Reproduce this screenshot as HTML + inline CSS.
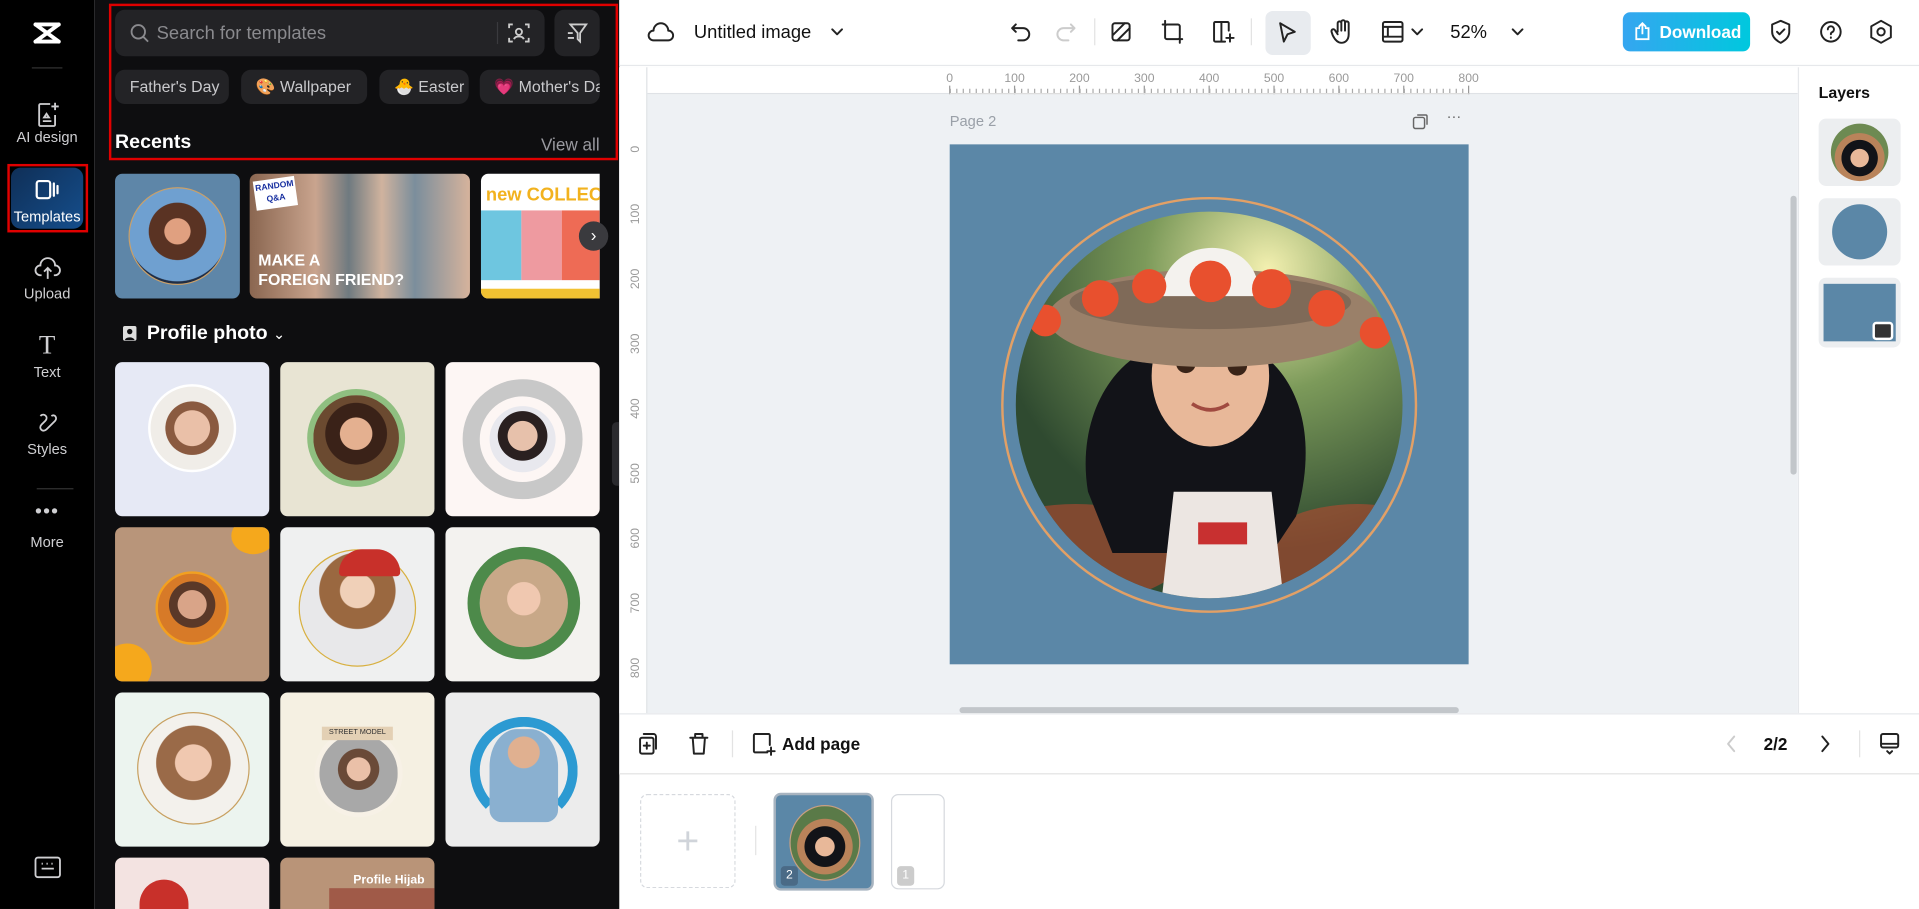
<!DOCTYPE html>
<html><head><meta charset="utf-8"><style>
*{box-sizing:border-box;margin:0;padding:0}
html,body{width:1919px;height:909px;overflow:hidden;background:#fff;font-family:"Liberation Sans",sans-serif}
#s{position:absolute;left:0;top:0;width:1568px;height:742.9px;transform:scale(1.22385,1.2234);transform-origin:0 0;overflow:hidden}
.a{position:absolute}
.side{left:0;top:0;width:77px;height:743px;background:#000}
.si{position:absolute;left:0;width:77px;text-align:center;color:#cfcfd2;font-size:12px}
.panel{left:77px;top:0;width:429px;height:743px;background:#0e0e10;overflow:hidden}
.chip{position:absolute;top:57px;height:28px;background:#232326;border-radius:8px;color:#c9c9cc;font-size:13px;line-height:28px;padding-left:12px;white-space:nowrap;overflow:hidden}
.cell{position:absolute;width:126px;height:126px;border-radius:6px;overflow:hidden}
.ph{position:absolute;border-radius:50%}
.ic{stroke:#222;fill:none;stroke-width:1.6;stroke-linecap:round;stroke-linejoin:round}
</style></head><body><div id="s">

<div class="a side">
 <svg class="a" style="left:26px;top:17px" width="25" height="20" viewBox="0 0 25 20"><path d="M3 3 L22 17 M22 3 L3 17 M3 3h19 M3 17h19" stroke="#fff" stroke-width="3.2" fill="none" stroke-linecap="round"/></svg>
 <div class="a" style="left:26px;top:55px;width:25px;height:1px;background:#333"></div>
 <svg class="a" style="left:29px;top:83px" width="20" height="22" viewBox="0 0 20 22"><path d="M12 2H4a1 1 0 0 0-1 1v16a1 1 0 0 0 1 1h11a1 1 0 0 0 1-1v-8 M6 16h7 M7 13l2-3 2 3z" stroke="#cfcfd2" stroke-width="1.5" fill="none"/><path d="M16 1v6M13 4h6" stroke="#cfcfd2" stroke-width="1.5"/></svg>
 <div class="si" style="top:105px">AI design</div>
 <div class="a" style="left:9px;top:137px;width:59px;height:50px;border-radius:8px;background:linear-gradient(135deg,#0f2f57,#154e8c)"></div>
 <div class="a" style="left:6px;top:134px;width:66px;height:56px;border:2px solid #e00000"></div>
 <svg class="a" style="left:29px;top:146px" width="20" height="18" viewBox="0 0 20 18"><rect x="1" y="2" width="11" height="14" rx="2" stroke="#fff" stroke-width="1.8" fill="none"/><path d="M15 4v10M18 6v6" stroke="#fff" stroke-width="1.8" stroke-linecap="round"/></svg>
 <div class="si" style="top:170px;color:#fff;font-size:12px">Templates</div>
 <svg class="a" style="left:28px;top:210px" width="22" height="20" viewBox="0 0 22 20"><path d="M6 15H5a4 4 0 0 1 0-8 6 6 0 0 1 12 0 4 4 0 0 1 0 8h-1 M11 9v9 M8 12l3-3 3 3" stroke="#cfcfd2" stroke-width="1.5" fill="none"/></svg>
 <div class="si" style="top:233px">Upload</div>
 <div class="si" style="top:269px;font-size:22px;font-family:'Liberation Serif',serif">T</div>
 <div class="si" style="top:297px">Text</div>
 <svg class="a" style="left:29px;top:336px" width="20" height="20" viewBox="0 0 20 20"><path d="M4 4c3-3 7 1 4 4L5 11c-3 3 1 7 4 4l7-7c2-2 0-6-3-4" stroke="#cfcfd2" stroke-width="1.5" fill="none"/></svg>
 <div class="si" style="top:360px">Styles</div>
 <div class="a" style="left:30px;top:399px;width:30px;height:1px;background:#333"></div>
 <div class="si" style="top:410px;font-size:16px;letter-spacing:1px">•••</div>
 <div class="si" style="top:436px">More</div>
 <svg class="a" style="left:28px;top:700px" width="22" height="18" viewBox="0 0 22 18"><rect x="1" y="1" width="20" height="16" rx="2" stroke="#cfcfd2" stroke-width="1.5" fill="none"/><path d="M6 6h1M10 6h1M14 6h1M6 10h10" stroke="#cfcfd2" stroke-width="1.5"/></svg>
</div>

<div class="a panel">
 <div class="a" style="left:17px;top:8px;width:351px;height:38px;background:#232326;border-radius:8px"></div>
 <svg class="a" style="left:29px;top:19px" width="16" height="16" viewBox="0 0 16 16"><circle cx="7" cy="7" r="5.5" stroke="#8a8a8e" stroke-width="1.5" fill="none"/><path d="M11 11l4 4" stroke="#8a8a8e" stroke-width="1.5"/></svg>
 <div class="a" style="left:51px;top:19px;color:#8a8a8e;font-size:15px">Search for templates</div>
 <div class="a" style="left:329px;top:18px;width:1px;height:18px;background:#3a3a3e"></div>
 <svg class="a" style="left:338px;top:18px" width="18" height="18" viewBox="0 0 18 18"><path d="M1 5V2h3M14 2h3v3M17 13v3h-3M4 16H1v-3" stroke="#ccc" stroke-width="1.5" fill="none"/><circle cx="9" cy="8" r="2.5" stroke="#ccc" stroke-width="1.5" fill="none"/><path d="M5 14c1-3 7-3 8 0" stroke="#ccc" stroke-width="1.5" fill="none"/></svg>
 <div class="a" style="left:376px;top:8px;width:37px;height:38px;background:#232326;border-radius:8px"></div>
 <svg class="a" style="left:386px;top:18px" width="18" height="18" viewBox="0 0 18 18"><path d="M3 2h13l-5 7v7l-2-2V9z M1 9h4 M1 13h5" stroke="#ccc" stroke-width="1.5" fill="none"/></svg>
 <div class="chip" style="left:17px;width:93px">Father's Day</div>
 <div class="chip" style="left:120px;width:103px">🎨 Wallpaper</div>
 <div class="chip" style="left:233px;width:73px">🐣 Easter</div>
 <div class="chip" style="left:315px;width:98px">💗 Mother's Da</div>
 <div class="a" style="left:17px;top:108px;color:#fff;font-size:16px;font-weight:bold">Recents</div>
 <div class="a" style="right:16px;top:110px;color:#9a9aa0;font-size:14px">View all</div>
 <div class="a" style="left:12px;top:3px;width:416px;height:128px;border:2px solid #e00000"></div>
 <div class="a" style="left:17px;top:142px;width:102px;height:102px;background:#5e86a8;border-radius:6px"><div class="ph" style="left:11px;top:11px;width:80px;height:80px;border:1px solid #c9a06a;background:radial-gradient(circle at 50% 45%,#e0a080 0 18%,#5a3323 19% 40%,#6fa0d0 41% 70%,#1f2d45 71%)"></div></div>
 <div class="a" style="left:127px;top:142px;width:180px;height:102px;border-radius:6px;overflow:hidden;background:linear-gradient(90deg,#8a6650 0,#c9a48e 30%,#6f7a80 45%,#d0b39e 60%,#7b8e9c 75%,#d6b39c 100%)">
  <div class="a" style="left:4px;top:4px;width:34px;height:24px;background:#fff;transform:rotate(-8deg);color:#1830a0;font-size:7px;font-weight:bold;text-align:center;line-height:10px;padding-top:2px">RANDOM<br>Q&amp;A</div>
  <div class="a" style="left:7px;top:63px;color:#fff;font-size:13px;font-weight:bold;line-height:16px">MAKE A<br>FOREIGN FRIEND?</div></div>
 <div class="a" style="left:316px;top:142px;width:97px;height:102px;border-radius:6px 0 0 6px;overflow:hidden;background:#fff">
  <div class="a" style="left:4px;top:9px;color:#f2b21e;font-size:15px;font-weight:bold;white-space:nowrap">new COLLEC</div>
  <div class="a" style="left:0;top:30px;width:33px;height:57px;background:#6ec6e0"></div><div class="a" style="left:33px;top:30px;width:33px;height:57px;background:#ee9aa0"></div><div class="a" style="left:66px;top:30px;width:31px;height:57px;background:#ee6b55"></div>
  <div class="a" style="left:0;top:94px;width:97px;height:8px;background:#f2c232"></div></div>
 <div class="a" style="left:396px;top:181px;width:24px;height:24px;border-radius:50%;background:#3a3a3e;color:#fff;font-size:14px;text-align:center;line-height:23px">›</div>
 <svg class="a" style="left:23px;top:266px" width="12" height="13" viewBox="0 0 12 13"><rect x="0.5" y="0.5" width="11" height="12" rx="1.5" fill="#ddd"/><circle cx="6" cy="5" r="2.2" fill="#0e0e10"/><path d="M2 12c1-3 7-3 8 0z" fill="#0e0e10"/></svg>
 <div class="a" style="left:43px;top:264px;color:#fff;font-size:16px;font-weight:bold">Profile photo <span style="font-size:12px;font-weight:normal">⌄</span></div>

 <div class="cell" style="left:17px;top:296px;background:#e6e9f5"><div class="ph" style="left:27px;top:18px;width:72px;height:72px;border:2px solid #fff;background:radial-gradient(circle at 50% 50%,#eac0a8 0 30%,#8a5a40 31% 45%,#f0ede8 46%)"></div></div>
 <div class="cell" style="left:152px;top:296px;background:#e8e4d3"><div class="ph" style="left:22px;top:22px;width:80px;height:80px;border:5px solid #8fbf80;background:radial-gradient(circle at 50% 45%,#e4b090 0 25%,#3a2218 26% 48%,#6b4a30 49%)"></div></div>
 <div class="cell" style="left:287px;top:296px;background:#fdf6f4"><div class="ph" style="left:14px;top:14px;width:98px;height:98px;border:14px solid #c8c8c8"><div class="ph" style="left:8px;top:8px;width:54px;height:54px;background:radial-gradient(circle at 50% 45%,#e7c1ab 0 30%,#2a2020 31% 50%,#e8e8ee 51%)"></div></div></div>

 <div class="cell" style="left:17px;top:431px;background:#b8957a"><div class="ph" style="left:33px;top:36px;width:60px;height:60px;border:2px solid #f2a020;background:radial-gradient(circle at 50% 45%,#d9a488 0 28%,#5a3828 29% 45%,#d77a28 46%)"></div><div class="a" style="left:-10px;top:95px;width:40px;height:40px;border-radius:50%;background:#f5a81c"></div><div class="a" style="left:95px;top:-8px;width:36px;height:30px;border-radius:50%;background:#f5a81c"></div></div>
 <div class="cell" style="left:152px;top:431px;background:#eff0f0"><div class="ph" style="left:15px;top:18px;width:96px;height:96px;border:1px solid #d8b040;background:radial-gradient(circle at 50% 35%,#f0d0b8 0 18%,#9a6840 19% 40%,#e8e8ea 41%)"></div><div class="a" style="left:48px;top:18px;width:50px;height:22px;border-radius:25px 25px 4px 4px;background:#c8302a"></div></div>
 <div class="cell" style="left:287px;top:431px;background:#f3f2ef"><div class="ph" style="left:18px;top:16px;width:92px;height:92px;border:10px solid #4d8a4a;background:radial-gradient(circle at 50% 45%,#f0c8b0 0 25%,#c8a888 26%)"></div></div>

 <div class="cell" style="left:17px;top:566px;background:#ecf4ef"><div class="ph" style="left:18px;top:16px;width:92px;height:92px;border:1px solid #c8a060;background:radial-gradient(circle at 50% 45%,#f0c8b0 0 22%,#9a6a48 23% 45%,#f3f1ec 46%)"></div></div>
 <div class="cell" style="left:152px;top:566px;background:#f5f0e2"><div class="ph" style="left:28px;top:30px;width:72px;height:72px;border:4px solid #f7f1e6;background:radial-gradient(circle at 50% 45%,#eac0a8 0 20%,#6a4a38 21% 35%,#a8a8a8 36%)"></div><div class="a" style="left:34px;top:28px;width:58px;height:11px;background:#e3d0b4;font-size:6px;text-align:center;color:#333;line-height:11px">STREET MODEL</div></div>
 <div class="cell" style="left:287px;top:566px;background:#ececec"><div class="ph" style="left:20px;top:20px;width:88px;height:88px;border:8px solid #2c9ad2;border-bottom-color:transparent;border-left-color:#2c9ad2"></div><div class="ph" style="left:36px;top:30px;width:56px;height:76px;border-radius:40% 40% 10px 10px;background:radial-gradient(circle at 50% 25%,#e0b090 0 20%,#8ab0d0 21%)"></div></div>

 <div class="cell" style="left:17px;top:701px;height:42px;border-radius:6px 6px 0 0;background:#f3e3e1"><div class="a" style="left:20px;top:18px;width:40px;height:30px;border-radius:20px 20px 0 0;background:#c8302a"></div></div>
 <div class="cell" style="left:152px;top:701px;height:42px;border-radius:6px 6px 0 0;background:#b99478"><div class="a" style="right:8px;top:12px;color:#fff;font-size:10px;font-weight:bold;text-align:right;line-height:13px">Profile Hijab<br>2024</div><div class="a" style="left:40px;top:25px;width:86px;height:30px;background:#a05a48"></div></div>
 <div class="a" style="left:423px;top:345px;width:8px;height:52px;background:#2a2a2e;border-radius:4px 0 0 4px"></div>
</div>

<div class="a" style="left:506px;top:0;width:1062px;height:54px;background:#fff;border-bottom:1px solid #e6e8eb"></div>
<svg class="a" style="left:529px;top:17px" width="22" height="18" viewBox="0 0 22 18"><path d="M6 16H5a4 4 0 0 1 0-8 6 6 0 0 1 12 0 4 4 0 0 1 0 8H6" class="ic"/></svg>
<div class="a" style="left:567px;top:18px;font-size:15px;color:#111">Untitled image</div>
<svg class="a" style="left:678px;top:20px" width="12" height="12" viewBox="0 0 12 12"><path d="M2 4l4 4 4-4" class="ic"/></svg>
<svg class="a" style="left:825px;top:17px" width="18" height="18" viewBox="0 0 18 18"><path d="M5 3L2 6l3 3 M2 6h9a5 5 0 0 1 0 10H7" class="ic"/></svg>
<svg class="a" style="left:862px;top:17px" width="18" height="18" viewBox="0 0 18 18"><path d="M13 3l3 3-3 3 M16 6H7a5 5 0 0 0 0 10h4" class="ic" style="stroke:#ccc"/></svg>
<div class="a" style="left:894px;top:15px;width:1px;height:22px;background:#e3e3e3"></div>
<svg class="a" style="left:907px;top:17px" width="18" height="18" viewBox="0 0 18 18"><rect x="2" y="2" width="14" height="14" rx="2" class="ic"/><path d="M2 12L12 2M6 16L16 6" class="ic"/></svg>
<svg class="a" style="left:948px;top:16px" width="20" height="20" viewBox="0 0 20 20"><rect x="4" y="4" width="12" height="12" rx="1.5" class="ic"/><path d="M2 4h2M16 16h2M4 1v3M16 16v3" class="ic"/></svg>
<svg class="a" style="left:990px;top:16px" width="20" height="20" viewBox="0 0 20 20"><path d="M14 9V3a1 1 0 0 0-1-1H3a1 1 0 0 0-1 1v14a1 1 0 0 0 1 1h8 M8 2v16 M15 12v6M12 15h6" class="ic"/></svg>
<div class="a" style="left:1022px;top:15px;width:1px;height:22px;background:#e3e3e3"></div>
<div class="a" style="left:1034px;top:9px;width:37px;height:36px;background:#e8ebef;border-radius:6px"></div>
<svg class="a" style="left:1043px;top:17px" width="18" height="20" viewBox="0 0 18 20"><path d="M3 2l12 7-6 2-3 6z" class="ic"/></svg>
<svg class="a" style="left:1087px;top:15px" width="20" height="22" viewBox="0 0 20 22"><path d="M6 11V4a1.5 1.5 0 0 1 3 0v6V3a1.5 1.5 0 0 1 3 0v7V4a1.5 1.5 0 0 1 3 0v9c0 5-3 7-6 7s-5-2-7-6l-1-3a1.5 1.5 0 0 1 3-1l2 3" class="ic"/></svg>
<svg class="a" style="left:1128px;top:16px" width="20" height="20" viewBox="0 0 20 20"><rect x="2" y="2" width="16" height="16" rx="1.5" class="ic"/><path d="M2 6h16M2 14h16M6 6v8" class="ic"/></svg>
<svg class="a" style="left:1152px;top:21px" width="12" height="10" viewBox="0 0 12 10"><path d="M2 3l4 4 4-4" class="ic"/></svg>
<div class="a" style="left:1185px;top:18px;font-size:15px;color:#111">52%</div>
<svg class="a" style="left:1234px;top:20px" width="12" height="12" viewBox="0 0 12 12"><path d="M2 4l4 4 4-4" class="ic"/></svg>
<div class="a" style="left:1326px;top:10px;width:104px;height:32px;border-radius:6px;background:linear-gradient(90deg,#35a6f0,#00c8de);color:#fff;font-size:14px;font-weight:bold;line-height:32px;padding-left:30px">Download</div>
<svg class="a" style="left:1335px;top:18px" width="14" height="15" viewBox="0 0 14 15"><path d="M5 5H2v9h10V5H9 M7 10V1M4 4l3-3 3 3" stroke="#fff" stroke-width="1.5" fill="none"/></svg>
<svg class="a" style="left:1446px;top:16px" width="18" height="20" viewBox="0 0 18 20"><path d="M9 1l7 3v6c0 4-3 7-7 9-4-2-7-5-7-9V4z M6 10l2 2 4-4" class="ic"/></svg>
<svg class="a" style="left:1486px;top:16px" width="20" height="20" viewBox="0 0 20 20"><circle cx="10" cy="10" r="8" class="ic"/><path d="M7.5 8a2.5 2.5 0 1 1 3.5 2.3c-.7.3-1 .8-1 1.5V12 M10 14.5v.5" class="ic"/></svg>
<svg class="a" style="left:1527px;top:16px" width="20" height="20" viewBox="0 0 20 20"><path d="M10 1l8 4.5v9L10 19l-8-4.5v-9z" class="ic"/><circle cx="10" cy="10" r="3" class="ic"/></svg>

<div class="a" style="left:506px;top:55px;width:963px;height:528px;background:#eef1f4"></div>
<div class="a" style="left:506px;top:55px;width:963px;height:22px;background:#fff;border-bottom:1px solid #dfe2e6"></div>
<div class="a" style="left:506px;top:55px;width:23px;height:528px;background:#fff;border-right:1px solid #dfe2e6"></div>
<svg class="a" style="left:506px;top:55px" width="963" height="528">
 <g font-family="Liberation Sans" font-size="10" fill="#999">
  <text x="270" y="12" text-anchor="middle">0</text><text x="323" y="12" text-anchor="middle">100</text><text x="376" y="12" text-anchor="middle">200</text><text x="429" y="12" text-anchor="middle">300</text><text x="482" y="12" text-anchor="middle">400</text><text x="535" y="12" text-anchor="middle">500</text><text x="588" y="12" text-anchor="middle">600</text><text x="641" y="12" text-anchor="middle">700</text><text x="694" y="12" text-anchor="middle">800</text>
  <g transform="rotate(-90)"><text x="-67" y="16" text-anchor="middle">0</text><text x="-120" y="16" text-anchor="middle">100</text><text x="-173" y="16" text-anchor="middle">200</text><text x="-226" y="16" text-anchor="middle">300</text><text x="-279" y="16" text-anchor="middle">400</text><text x="-332" y="16" text-anchor="middle">500</text><text x="-385" y="16" text-anchor="middle">600</text><text x="-438" y="16" text-anchor="middle">700</text><text x="-491" y="16" text-anchor="middle">800</text></g>
 </g>
 <path d="M270 15v7M323 15v7M376 15v7M429 15v7M482 15v7M535 15v7M588 15v7M641 15v7M694 15v7" stroke="#999"/>
 <path d="M270 19.5h424" stroke="#aaa" stroke-width="4" stroke-dasharray="1 4.3" fill="none"/>
 <path d="M270 21.5h424" stroke="#ddd"/>
</svg>
<div class="a" style="left:776px;top:92px;font-size:12px;color:#9aa0a8">Page 2</div>
<svg class="a" style="left:1154px;top:93px" width="13" height="13" viewBox="0 0 13 13"><rect x="1" y="3" width="9" height="9" rx="1.5" stroke="#666" stroke-width="1.2" fill="none"/><path d="M4 1h7a1 1 0 0 1 1 1v7" stroke="#666" stroke-width="1.2" fill="none"/></svg>
<div class="a" style="left:1182px;top:88px;font-size:12px;color:#666">···</div>
<div class="a" style="left:776px;top:118px;width:424px;height:425px;background:#5b87a7"></div>
<div class="a" style="left:818px;top:161px;width:340px;height:340px;border-radius:50%;border:2.5px solid #e2a066"></div>
<svg class="a" style="left:829px;top:172px" width="318" height="318" viewBox="0 0 318 318">
 <defs><clipPath id="c"><circle cx="159" cy="159" r="158"/></clipPath>
 <radialGradient id="bg" cx="0.65" cy="0.15" r="0.9"><stop offset="0" stop-color="#f3f0b0"/><stop offset="0.35" stop-color="#7c9a5a"/><stop offset="0.8" stop-color="#2f4a30"/></radialGradient></defs>
 <g clip-path="url(#c)">
  <rect width="318" height="318" fill="url(#bg)"/>
  <ellipse cx="50" cy="280" rx="90" ry="40" fill="#b84a30" opacity=".6"/>
  <ellipse cx="280" cy="280" rx="80" ry="40" fill="#b84a30" opacity=".6"/>
  <path d="M60 230c-10-60 20-110 60-120h70c40 20 60 70 40 140l-20 30H80z" fill="#121318"/>
  <path d="M130 230h80l10 90H120z" fill="#ece6e2"/>
  <path d="M150 255h40v18h-40z" fill="#c83030"/>
  <ellipse cx="160" cy="135" rx="48" ry="58" fill="#e8b899"/>
  <circle cx="140" cy="125" r="8" fill="#3a2418"/><circle cx="182" cy="127" r="8" fill="#3a2418"/>
  <path d="M145 158q15 10 30 0" stroke="#a04a40" stroke-width="3" fill="none"/>
  <path d="M115 110c10-20 70-25 95 0l-5-15H120z" fill="#121318"/>
  <ellipse cx="162" cy="88" rx="135" ry="40" fill="#9a8069"/>
  <ellipse cx="160" cy="75" rx="115" ry="22" fill="#7f6a58"/>
  <path d="M120 70c0-50 80-55 80 0z" fill="#f4f2ee"/>
  <g fill="#e8502e"><circle cx="25" cy="90" r="13"/><circle cx="70" cy="72" r="15"/><circle cx="110" cy="62" r="14"/><circle cx="160" cy="58" r="17"/><circle cx="210" cy="64" r="16"/><circle cx="255" cy="80" r="15"/><circle cx="295" cy="100" r="13"/></g>
 </g>
</svg>
<div class="a" style="left:784px;top:578px;width:408px;height:5px;border-radius:3px;background:#c2c6ca"></div>
<div class="a" style="left:1463px;top:160px;width:5px;height:228px;border-radius:3px;background:#c2c6ca"></div>

<div class="a" style="left:1469px;top:55px;width:99px;height:528px;background:#fff;border-left:1px solid #e6e8eb"></div>
<div class="a" style="left:1486px;top:68px;font-size:13px;font-weight:bold;color:#111">Layers</div>
<div class="a" style="left:1486px;top:97px;width:67px;height:55px;border-radius:6px;background:#eceef0"><div class="ph" style="left:10px;top:4px;width:47px;height:47px;background:radial-gradient(circle at 50% 60%,#e8b899 0 20%,#121318 21% 40%,#b9835a 41% 55%,#6d8a52 56%)"></div></div>
<div class="a" style="left:1486px;top:162px;width:67px;height:55px;border-radius:6px;background:#eceef0"><div class="ph" style="left:11px;top:5px;width:45px;height:45px;background:#5b87a7"></div></div>
<div class="a" style="left:1486px;top:227px;width:67px;height:57px;border-radius:6px;background:#eceef0"><div class="a" style="left:4px;top:5px;width:59px;height:47px;background:#5b87a7"></div><div class="a" style="left:44px;top:36px;width:17px;height:15px;background:#333;border-radius:3px;border:2px solid #fff"></div></div>

<div class="a" style="left:506px;top:583px;width:1062px;height:50px;background:#fff;border-top:1px solid #e6e8eb;border-bottom:1px solid #e3e3e3"></div>
<svg class="a" style="left:521px;top:598px" width="18" height="20" viewBox="0 0 18 20"><rect x="2" y="5" width="11" height="13" rx="1.5" class="ic"/><path d="M5 2h8a2 2 0 0 1 2 2v10 M7.5 9v5M5 11.5h5" class="ic"/></svg>
<svg class="a" style="left:562px;top:598px" width="18" height="20" viewBox="0 0 18 20"><path d="M2 5h14M6 5V2h6v3M4 5l1 13h8l1-13" class="ic"/></svg>
<div class="a" style="left:598px;top:597px;width:1px;height:22px;background:#e3e3e3"></div>
<svg class="a" style="left:614px;top:598px" width="20" height="20" viewBox="0 0 20 20"><path d="M13 17H3a1 1 0 0 1-1-1V3a1 1 0 0 1 1-1h11a1 1 0 0 1 1 1v8 M16 13v6M13 16h6" class="ic"/></svg>
<div class="a" style="left:639px;top:600px;font-size:14px;font-weight:bold;color:#111">Add page</div>
<svg class="a" style="left:1409px;top:600px" width="12" height="16" viewBox="0 0 12 16"><path d="M8 2L3 8l5 6" class="ic" style="stroke:#ccc"/></svg>
<div class="a" style="left:1441px;top:600px;font-size:14px;font-weight:bold;color:#111">2/2</div>
<svg class="a" style="left:1485px;top:600px" width="12" height="16" viewBox="0 0 12 16"><path d="M4 2l5 6-5 6" class="ic"/></svg>
<div class="a" style="left:1519px;top:597px;width:1px;height:22px;background:#e3e3e3"></div>
<svg class="a" style="left:1535px;top:598px" width="18" height="20" viewBox="0 0 18 20"><rect x="2" y="2" width="14" height="11" rx="1.5" class="ic"/><path d="M2 10h14M7 16l2 2 2-2" class="ic"/></svg>
<div class="a" style="left:523px;top:649px;width:78px;height:77px;border:1px dashed #d6d9de;border-radius:6px;color:#d0d4da;font-size:32px;text-align:center;line-height:74px;font-weight:200">+</div>
<div class="a" style="left:617px;top:675px;width:1px;height:24px;background:#e3e3e3"></div>
<div class="a" style="left:632px;top:648px;width:82px;height:80px;border:2px solid #a8b4c0;border-radius:6px;background:#5b87a7;overflow:hidden"><div class="ph" style="left:11px;top:8px;width:58px;height:62px;background:radial-gradient(circle at 50% 55%,#e8b899 0 18%,#121318 19% 38%,#b9835a 39% 52%,#5a7a48 53%);border:1px solid #c9a080"></div><div class="a" style="left:4px;top:58px;width:14px;height:16px;background:#4a6a86;border-radius:3px;color:#fff;font-size:10px;text-align:center;line-height:16px">2</div></div>
<div class="a" style="left:728px;top:649px;width:44px;height:78px;border:1px solid #d6d9de;border-radius:6px;background:#fff"><div class="a" style="left:4px;top:58px;width:14px;height:16px;background:#ccc;border-radius:3px;color:#fff;font-size:10px;text-align:center;line-height:16px">1</div></div>
</div></body></html>
